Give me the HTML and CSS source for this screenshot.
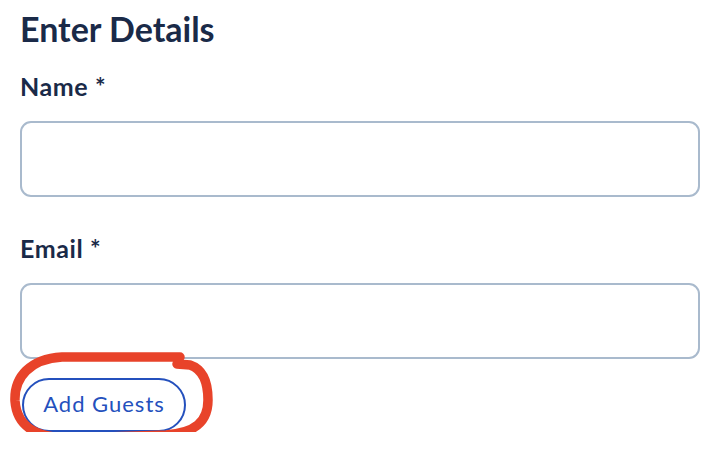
FILE: index.html
```html
<!DOCTYPE html>
<html>
	<head>
		<meta charset="utf-8" />
		<title>Enter Details</title>
		<link rel="stylesheet" href="styles.css">
	</head>
	<body>
		<div class="form">
			<h1 class="title">Enter Details</h1>
			<label class="field">
				<span class="label">Name *</span>
				<input type="text" class="input">
			</label>
			<label class="field">
				<span class="label">Email *</span>
				<input type="email" class="input">
			</label>
			<div class="actions">
				<button type="button" class="guests">Add Guests</button>
				<svg class="mark" width="230" height="110" viewBox="0 340 230 110">
					<path d="M180 357 L62 357 C30 359 14 377 15 401 C17 428 38 439 76 438 L166 435 C195 433 208 422 208 400 C208 381 202 369 190 365 L177 364" />
				</svg>
			</div>
		</div>
	</body>
</html>
```

FILE: styles.css
```css
*{
	margin: 0;
	padding: 0;
	box-sizing: border-box;
}
body{
	font-family: Lato, "Open Sans", sans-serif;
	color: #1a2a48;
	background: #fff;
}
.form{
	width: 722px;
	padding: 9px 22px 0 20px;
	display: flex;
	flex-direction: column;
}
.title{
	font-size: 34px;
	font-weight: 700;
	line-height: 40px;
	margin-bottom: 22px;
}
.field{
	display: flex;
	flex-direction: column;
}
.label{
	font-size: 25px;
	font-weight: 700;
	line-height: 30px;
	letter-spacing: 0.6px;
	margin-bottom: 20px;
}
.input{
	height: 76px;
	border: 2px solid #a9bacd;
	border-radius: 11px;
	background: #fff;
	outline: none;
	margin-bottom: 36px;
}
.field + .field .input{
	margin-bottom: 19px;
}
.actions{
	position: relative;
}
.guests{
	width: 164px;
	height: 54px;
	margin-left: 2px;
	padding-bottom: 4px;
	border: 2px solid #2450bd;
	border-radius: 27px;
	background: #fff;
	color: #2450bd;
	font-family: Lato, "Open Sans", sans-serif;
	font-size: 22px;
	letter-spacing: 1px;
}
.mark{
	position: absolute;
	left: -20px;
	top: -38px;
	pointer-events: none;
}
.mark path{
	fill: none;
	stroke: #e8432a;
	stroke-width: 9.5;
	stroke-linecap: round;
	stroke-linejoin: round;
}
```
